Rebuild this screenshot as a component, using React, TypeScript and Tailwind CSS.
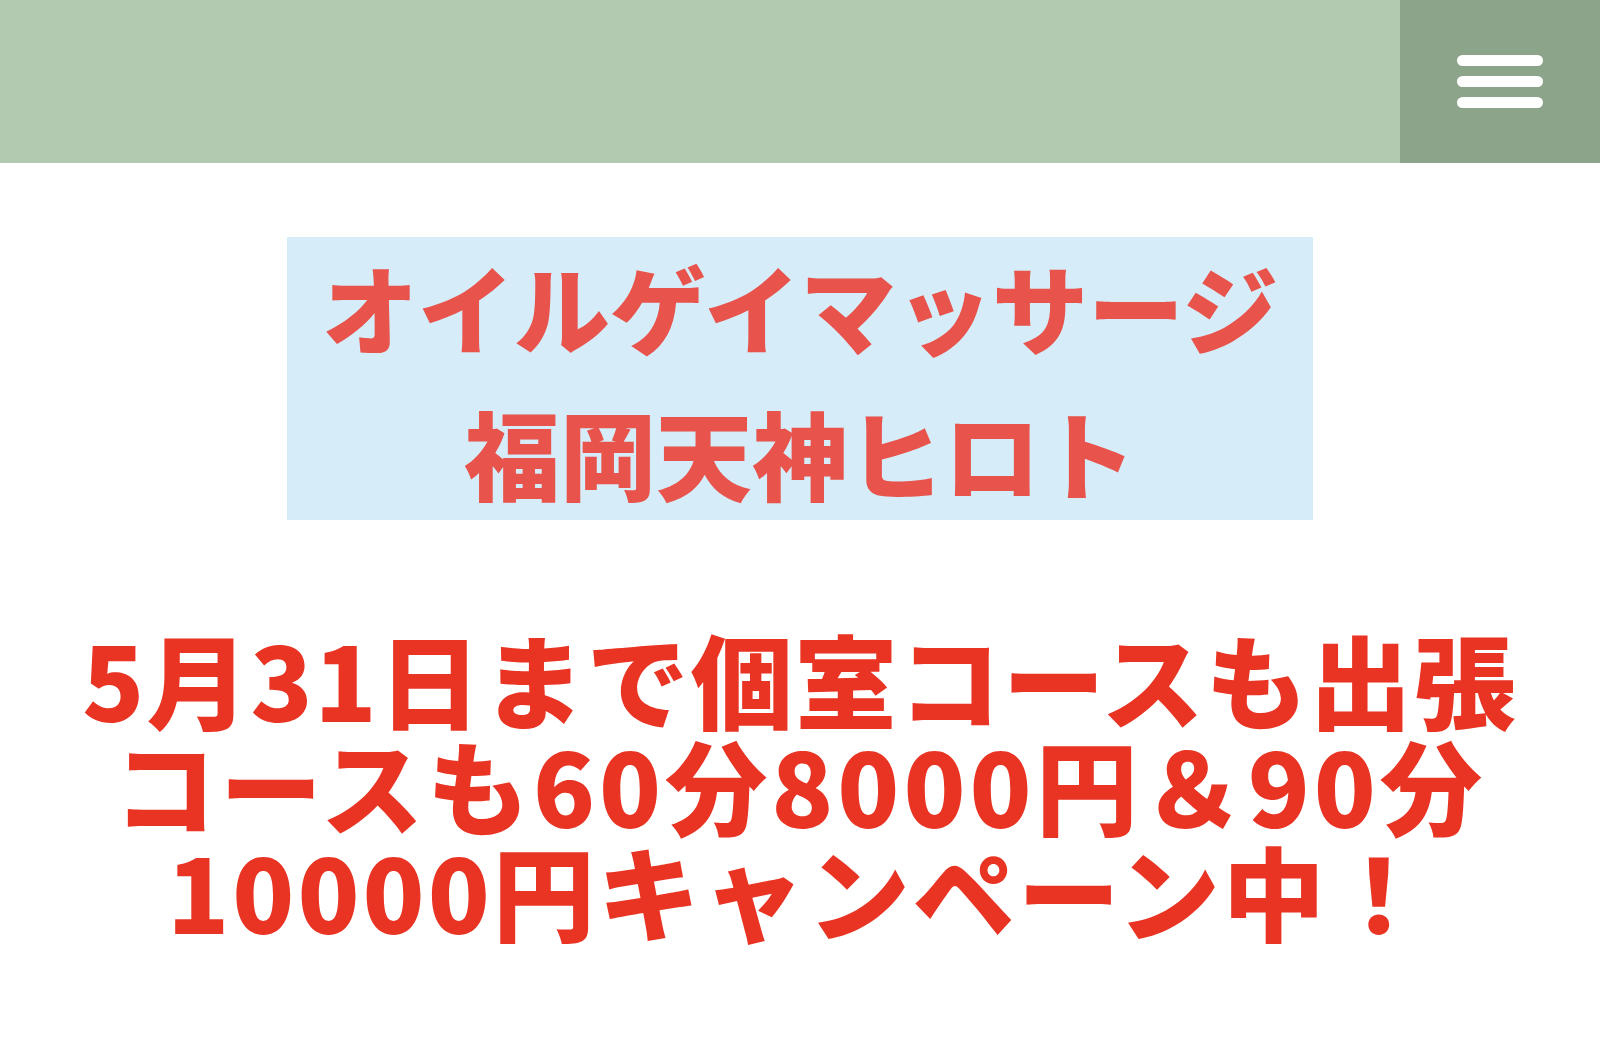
import React from "react";

const jp = { fontFamily: '"Noto Sans CJK JP", "Noto Sans", sans-serif' };

const Header: React.FC = () => {
  return (
    <header className="flex h-[163px] w-full">
      <div className="flex-1 bg-[#b2cab0]" />
      <button
        type="button"
        aria-label="menu"
        className="flex w-[200px] flex-col items-center justify-center gap-[10px] bg-[#8ca48a]"
      >
        <span className="block h-[11px] w-[86px] rounded-full bg-white" />
        <span className="block h-[11px] w-[86px] rounded-full bg-white" />
        <span className="block h-[11px] w-[86px] rounded-full bg-white" />
      </button>
    </header>
  );
};

const App: React.FC = () => {
  return (
    <div className="min-h-[1063px] w-full bg-white" style={jp}>
      <Header />
      <main className="flex flex-col items-center">
        <div className="mt-[74px] flex h-[283px] w-[1026px] flex-col items-center justify-center bg-[#d6ecf9] text-[96px] font-black leading-[146px] text-[#e8534c]">
          <h1>オイルゲイマッサージ</h1>
          <p>福岡天神ヒロト</p>
        </div>
        <div className="mt-[105px] flex flex-col items-center text-[102px] font-black leading-[106px] text-[#e93424]">
          <p className="tracking-[2px]">5月31日まで個室コースも出張</p>
          <p className="tracking-[4px]">コースも60分8000円＆90分</p>
          <p className="tracking-[3px]">10000円キャンペーン中！</p>
        </div>
      </main>
    </div>
  );
};

export default App;
